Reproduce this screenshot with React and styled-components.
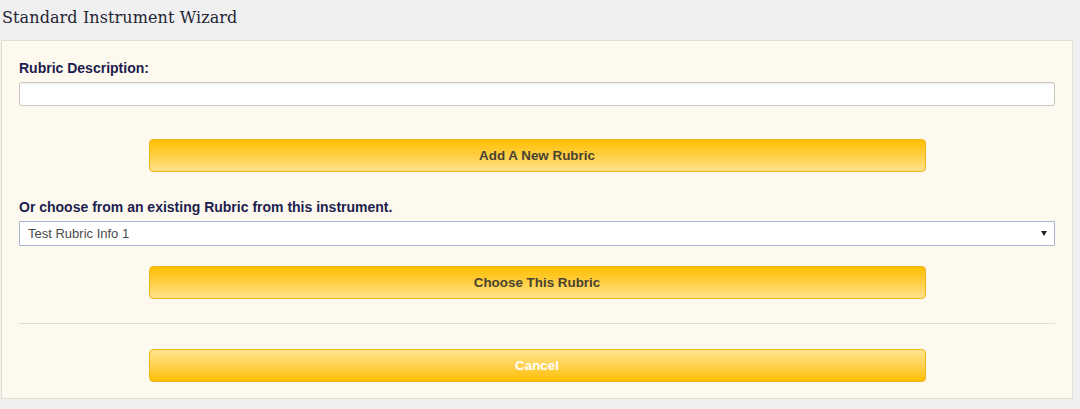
import React from 'react';
import styled, { createGlobalStyle } from 'styled-components';

const GlobalStyle = createGlobalStyle`
  body {
    margin: 0;
    background: #f0f0f0;
    font-family: "Liberation Sans", Arial, sans-serif;
  }
`;

const Page = styled.div`
  width: 1080px;
  height: 409px;
  background: #f0f0f0;
  padding-top: 6px;
  box-sizing: border-box;
`;

const Title = styled.h1`
  margin: 0 0 10px 2px;
  font-family: "DejaVu Serif", "Liberation Serif", serif;
  font-size: 16px;
  font-weight: normal;
  letter-spacing: 0.1px;
  line-height: 24px;
  color: #252535;
`;

const Panel = styled.div`
  margin-left: 1px;
  width: 1072px;
  box-sizing: border-box;
  background: #fdf9ee;
  border: 1px solid #e2ded2;
  padding: 19px 17px 16px 17px;
`;

const Label = styled.label`
  display: block;
  font-size: 14px;
  font-weight: bold;
  line-height: 16px;
  color: #1d1d4f;
  margin-bottom: 6px;
`;

const TextInput = styled.input`
  display: block;
  width: 100%;
  height: 24px;
  box-sizing: border-box;
  border: 1px solid #c9c6c0;
  border-radius: 3px;
  background: #fff;
  box-shadow: inset 0 1px 1px rgba(0, 0, 0, 0.06);
`;

const SelectWrap = styled.div`
  position: relative;
  height: 25px;
`;

const Select = styled.select`
  appearance: none;
  width: 100%;
  height: 25px;
  box-sizing: border-box;
  border: 1px solid #a7b6cf;
  border-radius: 1px;
  background: #fff;
  padding: 0 0 0 8px;
  font-family: "Liberation Sans", Arial, sans-serif;
  font-size: 13px;
  color: #4a4a4a;
`;

const Arrow = styled.span`
  position: absolute;
  right: 8px;
  top: 10px;
  width: 0;
  height: 0;
  border-left: 3px solid transparent;
  border-right: 3px solid transparent;
  border-top: 5px solid #222;
  pointer-events: none;
`;

const ButtonRow = styled.div`
  display: flex;
  justify-content: center;
  margin-top: ${(p) => p.$top}px;
  margin-bottom: ${(p) => p.$bottom || 0}px;
`;

const Button = styled.button`
  width: 75%;
  height: 33px;
  border: 1px solid #ebb71a;
  border-radius: 4px;
  font-family: "Liberation Sans", Arial, sans-serif;
  font-size: 13.4px;
  font-weight: bold;
  cursor: pointer;
  color: ${(p) => (p.$light ? '#fff' : '#4a4230')};
  background: ${(p) =>
    p.$light
      ? 'linear-gradient(to bottom, #ffe48f 0%, #ffd04a 55%, #ffbf00 100%)'
      : 'linear-gradient(to bottom, #ffbf00 0%, #ffcf45 50%, #ffe18c 100%)'};
`;

const Divider = styled.hr`
  border: 0;
  border-top: 1px solid #e3dfcf;
  margin: 24px 0 25px;
`;

export default function App() {
  return (
    <Page>
      <GlobalStyle />
      <Title>Standard Instrument Wizard</Title>
      <Panel>
        <Label>Rubric Description:</Label>
        <TextInput type="text" />
        <ButtonRow $top={33} $bottom={27}>
          <Button>Add A New Rubric</Button>
        </ButtonRow>
        <Label>Or choose from an existing Rubric from this instrument.</Label>
        <SelectWrap>
          <Select defaultValue="1">
            <option value="1">Test Rubric Info 1</option>
          </Select>
          <Arrow />
        </SelectWrap>
        <ButtonRow $top={20}>
          <Button>Choose This Rubric</Button>
        </ButtonRow>
        <Divider />
        <ButtonRow $top={0}>
          <Button $light>Cancel</Button>
        </ButtonRow>
      </Panel>
    </Page>
  );
}
